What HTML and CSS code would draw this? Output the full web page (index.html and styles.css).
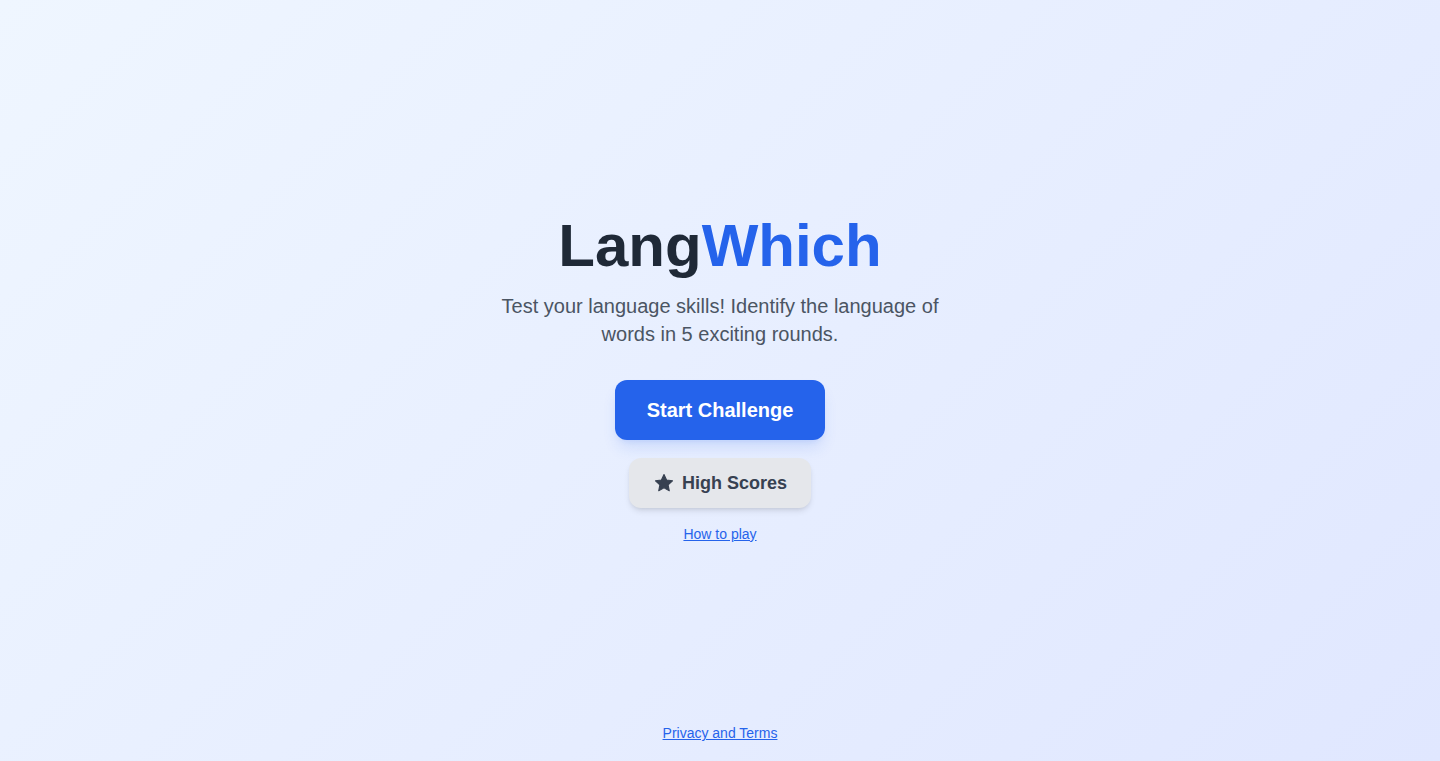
FILE: index.html
```html
<!DOCTYPE html>
<html lang="en">
<head>
<meta charset="utf-8">
<title>LangWhich</title>
<link rel="stylesheet" href="styles.css">
</head>
<body>
<div class="page">
  <main class="main">
    <h1 class="title">Lang<span class="accent">Which</span></h1>
    <p class="subtitle">Test your language skills! Identify the language of words in 5 exciting rounds.</p>
    <button class="btn-primary">Start Challenge</button>
    <button class="btn-secondary">
      <svg class="star" viewBox="0 0 24 24" width="22" height="22" aria-hidden="true"><path fill="currentColor" stroke="currentColor" stroke-width="1.2" stroke-linejoin="round" d="M12 2.8l2.8 6 6.5.76-4.8 4.48 1.26 6.44L12 17.3l-5.76 3.18 1.26-6.44-4.8-4.48 6.5-.76z"/></svg>
      <span>High Scores</span>
    </button>
    <a class="link" href="#">How to play</a>
  </main>
  <footer class="footer">
    <a class="link" href="#">Privacy and Terms</a>
  </footer>
</div>
</body>
</html>
```
FILE: styles.css
```css
* { box-sizing: border-box; }
html, body { margin: 0; padding: 0; }
body {
  font-family: "Liberation Sans", Arial, sans-serif;
  background: linear-gradient(135deg, #eff6ff 0%, #e0e7ff 100%);
  min-height: 100vh;
}
.page {
  min-height: 100vh;
  display: flex;
  flex-direction: column;
}
.main {
  flex: 1;
  display: flex;
  flex-direction: column;
  align-items: center;
  justify-content: center;
  padding-top: 50px;
  text-align: center;
}
.title {
  margin: 0 0 16px;
  font-size: 60px;
  line-height: 60px;
  font-weight: 700;
  color: #1f2937;
}
.accent { color: #2563eb; }
.subtitle {
  margin: 0 0 32px;
  max-width: 448px;
  font-size: 20px;
  line-height: 28px;
  color: #4b5563;
}
.btn-primary {
  font-family: inherit;
  border: none;
  background: #2563eb;
  color: #fff;
  font-size: 20px;
  line-height: 28px;
  font-weight: 700;
  padding: 16px 32px;
  border-radius: 12px;
  white-space: nowrap;
  box-shadow: 0 10px 15px -3px rgba(37, 99, 235, 0.15), 0 4px 6px -4px rgba(37, 99, 235, 0.15);
  margin-bottom: 18px;
  cursor: pointer;
}
.btn-secondary {
  font-family: inherit;
  border: none;
  background: #e5e7eb;
  color: #374151;
  font-size: 18px;
  line-height: 28px;
  font-weight: 700;
  padding: 11px 24px;
  border-radius: 12px;
  display: flex;
  align-items: center;
  gap: 7px;
  white-space: nowrap;
  box-shadow: 0 4px 6px -1px rgba(0, 0, 0, 0.1), 0 2px 4px -2px rgba(0, 0, 0, 0.1);
  margin-bottom: 16px;
  cursor: pointer;
}
.star { display: block; color: #374151; }
.link {
  font-size: 14px;
  line-height: 20px;
  color: #2563eb;
  text-decoration: underline;
}
.footer {
  text-align: center;
  padding: 14px 0 18px;
}
```
